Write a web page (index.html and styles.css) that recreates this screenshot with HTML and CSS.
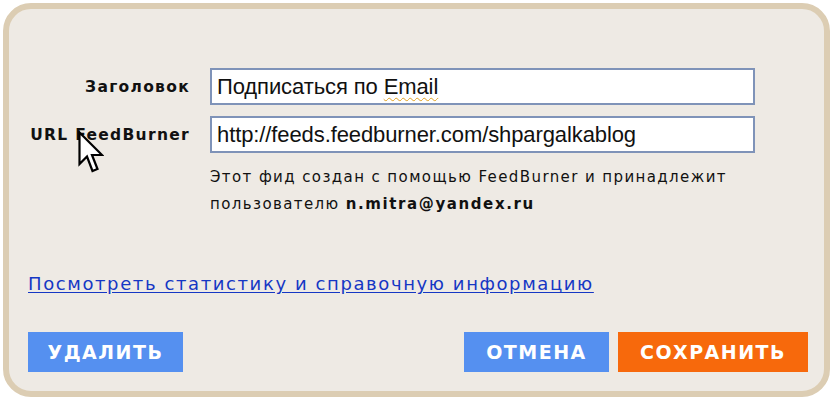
FILE: index.html
```html
<!DOCTYPE html>
<html lang="ru">
<head>
<meta charset="utf-8">
<title>FeedBurner</title>
<link rel="stylesheet" href="styles.css">
</head>
<body>
<div class="frame">
  <div class="form">
    <label class="label">Заголовок</label>
    <div class="field"><span class="value">Подписаться по <span class="spell">Email</span></span></div>
    <label class="label">URL FeedBurner</label>
    <div class="field"><span class="value">http://feeds.feedburner.com/shpargalkablog</span></div>
    <div class="empty"></div>
    <p class="desc">Этот фид создан с помощью FeedBurner и принадлежит<br>пользователю <b>n.mitra@yandex.ru</b></p>
  </div>
  <a class="link" href="#">Посмотреть статистику и справочную информацию</a>
  <div class="actions">
    <button class="btn btn-blue">УДАЛИТЬ</button>
    <div class="right">
      <button class="btn btn-blue btn-cancel">ОТМЕНА</button>
      <button class="btn btn-orange">СОХРАНИТЬ</button>
    </div>
  </div>
  <svg class="cursor" width="26" height="44" viewBox="0 0 26 44">
    <path d="M1.5 1.5 L1.5 33 L9 25.5 L14.5 40 L19.5 38 L14 24 L24 24 Z" fill="#fff" stroke="#000" stroke-width="2.2" stroke-linejoin="miter"/>
  </svg>
</div>
</body>
</html>
```
FILE: styles.css
```css
html, body {
  margin: 0;
  padding: 0;
  background: #ffffff;
}
body {
  padding: 3px 6px 7px 3px;
  box-sizing: border-box;
  width: 836px;
  height: 404px;
}
.frame {
  position: relative;
  box-sizing: border-box;
  height: 394px;
  border: 6px solid #dccdb3;
  border-radius: 28px;
  background: #eeeae4;
  padding: 59px 16px 0 19px;
  display: flex;
  flex-direction: column;
  font-family: "DejaVu Sans", Verdana, sans-serif;
}
.form {
  display: grid;
  grid-template-columns: 162px 545px;
  column-gap: 20px;
  row-gap: 11px;
  align-items: center;
}
.label {
  text-align: right;
  font-weight: bold;
  font-size: 15.5px;
  letter-spacing: 1.3px;
  color: #111;
}
.field {
  box-sizing: border-box;
  height: 37px;
  border: 2px solid #7f93b8;
  background: #ffffff;
  display: flex;
  align-items: center;
  padding: 0 5px;
}
.value {
  font-family: "Liberation Sans", Arial, sans-serif;
  font-size: 22px;
  color: #111;
  letter-spacing: -0.1px;
}
.spell {
  text-decoration: underline wavy #e0a020;
  text-decoration-thickness: 1px;
  text-underline-offset: 3px;
}
.desc {
  margin: 0;
  font-size: 15px;
  line-height: 27px;
  letter-spacing: 1.4px;
  color: #111;
}
.desc b {
  letter-spacing: 1.6px;
}
.link {
  margin-top: 55px;
  align-self: flex-start;
  color: #1537c4;
  font-size: 18px;
  letter-spacing: 1.6px;
  text-decoration: underline;
  text-underline-offset: 2px;
}
.actions {
  margin-top: 38px;
  display: flex;
  justify-content: space-between;
  align-items: center;
}
.right {
  display: flex;
  gap: 9px;
}
.btn {
  border: 0;
  height: 40px;
  padding: 0;
  color: #fff;
  font-family: "DejaVu Sans", Verdana, sans-serif;
  font-weight: bold;
  font-size: 19px;
  letter-spacing: 1.5px;
  cursor: pointer;
}
.btn-blue {
  background: #5590f0;
  width: 155px;
}
.btn-cancel {
  width: 145px;
}
.btn-orange {
  background: #f7690c;
  width: 190px;
}
.cursor {
  position: absolute;
  left: 69px;
  top: 122px;
}
```
